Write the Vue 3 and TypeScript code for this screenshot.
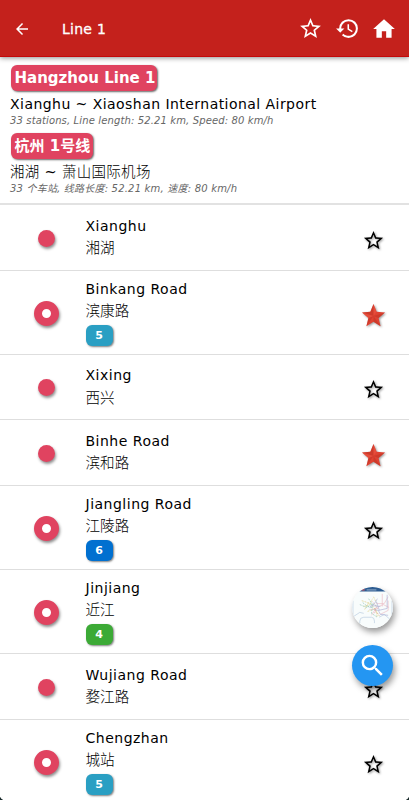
<script setup lang="ts">
interface Transfer {
  line: string
  color: string
}
interface Station {
  name: string
  local: string
  favorite: boolean
  transfer?: Transfer
}

const stations: Station[] = [
  { name: 'Xianghu', local: '湘湖', favorite: false },
  { name: 'Binkang Road', local: '滨康路', favorite: true, transfer: { line: '5', color: '#2a9fc3' } },
  { name: 'Xixing', local: '西兴', favorite: false },
  { name: 'Binhe Road', local: '滨和路', favorite: true },
  { name: 'Jiangling Road', local: '江陵路', favorite: false, transfer: { line: '6', color: '#0070d0' } },
  { name: 'Jinjiang', local: '近江', favorite: false, transfer: { line: '4', color: '#3caa36' } },
  { name: 'Wujiang Road', local: '婺江路', favorite: false },
  { name: 'Chengzhan', local: '城站', favorite: false, transfer: { line: '5', color: '#2a9fc3' } },
]
</script>

<template>
  <div class="screen">
    <header class="bar">
      <svg class="back" viewBox="0 0 24 24"><path d="M20 11H7.83l5.59-5.59L12 4l-8 8 8 8 1.41-1.41L7.83 13H20v-2z" /></svg>
      <h1 class="title">Line 1</h1>
      <svg class="action" viewBox="0 0 24 24"><path d="M22 9.24l-7.19-.62L12 2 9.19 8.63 2 9.24l5.46 4.73L5.82 21 12 17.27 18.18 21l-1.63-7.03L22 9.24zM12 15.4l-3.76 2.27 1-4.28-3.32-2.88 4.38-.38L12 6.1l1.71 4.04 4.38.38-3.32 2.88 1 4.28L12 15.4z" /></svg>
      <svg class="action" viewBox="0 0 24 24"><path d="M13 3a9 9 0 0 0-9 9H1l3.89 3.89.07.14L9 12H6c0-3.87 3.13-7 7-7s7 3.13 7 7-3.13 7-7 7c-1.93 0-3.68-.79-4.94-2.06l-1.42 1.42A8.95 8.95 0 0 0 13 21a9 9 0 0 0 0-18zm-1 5v5l4.28 2.54.72-1.21-3.5-2.08V8H12z" /></svg>
      <svg class="action home" viewBox="0 0 24 24"><path d="M10 20v-6h4v6h5v-8h3L12 3 2 12h3v8z" /></svg>
    </header>

    <section class="summary">
      <div class="badge">Hangzhou Line 1</div>
      <div class="route">Xianghu ~ Xiaoshan International Airport</div>
      <div class="facts">33 stations, Line length: 52.21 km, Speed: 80 km/h</div>
      <div class="badge local-badge">杭州 1号线</div>
      <div class="route local-route">湘湖 <span class="tilde">~</span> 萧山国际机场</div>
      <div class="facts local-facts">33 个车站, 线路长度: 52.21 km, 速度: 80 km/h</div>
    </section>

    <ul class="list">
      <li v-for="s in stations" :key="s.name" class="row" :class="{ tall: s.transfer }">
        <div class="marker"><span class="dot" :class="{ ring: s.transfer }"></span></div>
        <div class="names">
          <div class="name">{{ s.name }}</div>
          <div class="local">{{ s.local }}</div>
          <span v-if="s.transfer" class="chip" :style="{ background: s.transfer.color }">{{ s.transfer.line }}</span>
        </div>
        <svg v-if="s.favorite" class="star filled" viewBox="0 0 24 24">
          <path fill="#df4232" d="M12 0l3.3 8.2 8.7.7-6.7 5.7 2.1 8.6L12 18.6l-7.4 4.6 2.1-8.6L0 8.9l8.7-.7z" />
          <path fill="#b93224" d="M12 0v12.4L8.7 8.2zM24 8.9l-12 3.5 5.3 2.2zM19.4 23.2L12 12.4v6.2zM4.6 23.2L12 12.4l-5.3 2.2zM0 8.9l12 3.5-3.3-4.2z" opacity=".45" />
          <path fill="#f0604c" d="M12 0v12.4l3.3-4.2zM0 8.9l12 3.5-5.3 2.2z" opacity=".4" />
        </svg>
        <svg v-else class="star" viewBox="0 0 24 24"><path d="M22 9.24l-7.19-.62L12 2 9.19 8.63 2 9.24l5.46 4.73L5.82 21 12 17.27 18.18 21l-1.63-7.03L22 9.24zM12 15.4l-3.76 2.27 1-4.28-3.32-2.88 4.38-.38L12 6.1l1.71 4.04 4.38.38-3.32 2.88 1 4.28L12 15.4z" /></svg>
      </li>
    </ul>

    <div class="fab map">
      <svg viewBox="0 0 42 42" fill="none" stroke-width=".7">
        <path fill="#f8fcfc" d="M0 0h42v42H0z" />
        <path fill="#2d5c91" d="M0 0h42v4.5H0z" />
        <path stroke="#b8cce0" d="M1 14v20M41 14v20M8 37v-2q0-4 4-4h8q3 0 3 4v2M28 31l5-3 7 6M2 30l6-4 4 1" />
        <path stroke="#ecbcc6" d="M20 29l5-8 7-3 6 3M25 17h8l4-7M31 7v13M37 14v10l-8 4" />
        <path stroke="#ddcf85" stroke-dasharray="2 1" d="M10 14l9 3 5 6 4 7M12 20l6-2 3-6M16 25l8-3 2 9M22 10l3 6M13 23l4-7" />
        <path stroke="#93c8b6" stroke-dasharray="2 1" d="M8 18l7 3 6-4 5 3M17 12l4 6-1 9 6 4M11 16l5 4 5 1" />
        <path stroke="#b0b2d6" d="M18 21l5-4 3-5M22 23l5 1 2 4 8 1M36 8v14l-9 2M25 15l3 9M20 19l9 1" />
        <path stroke="#e39aa2" stroke-dasharray="1 1.5" d="M21 15l4 5-2 7M18 23l9-1M24 25l4 4" />
        <path stroke="#cf5663" stroke-width="1.2" d="M10 3h3" />
        <path stroke="#c5d5e6" d="M15 3h10" />
      </svg>
    </div>
    <div class="fab search">
      <svg viewBox="0 0 24 24"><path d="M15.5 14h-.79l-.28-.27A6.47 6.47 0 0 0 16 9.5 6.5 6.5 0 1 0 9.5 16c1.61 0 3.09-.59 4.23-1.57l.27.28v.79l5 4.99L20.49 19l-4.99-5zm-6 0a4.5 4.5 0 1 1 0-9 4.5 4.5 0 0 1 0 9z" /></svg>
    </div>
    <i class="corner left"></i>
    <i class="corner right"></i>
  </div>
</template>

<style>
body {
  overflow: hidden;
}
</style>

<style scoped>
.screen {
  position: relative;
  box-sizing: border-box;
  width: 100%;
  height: 800px;
  overflow: hidden;
  background: #fff;
  color: #000;
  font-family: "DejaVu Sans", "Noto Sans CJK SC", sans-serif;
}
.bar {
  display: flex;
  align-items: center;
  box-sizing: border-box;
  height: 57px;
  padding: 1px 12.5px 0 13px;
  background: #c4211c;
  border-bottom: 1px solid #c40809;
  box-shadow: 0 1px 5px rgba(0, 0, 0, .45);
  fill: #fff;
}
.back {
  width: 18px;
  height: 18px;
}
.title {
  flex: 1;
  margin: 0 0 0 31px;
  color: #fff;
  font-size: 14px;
  font-weight: 400;
  letter-spacing: .25px;
  line-height: 20px;
  -webkit-text-stroke: .3px #fff;
}
.action {
  width: 25px;
  height: 25px;
  margin-left: 12px;
}
.home {
  width: 26px;
  height: 26px;
  margin-left: 11px;
}
.summary {
  box-sizing: border-box;
  height: 148px;
  padding: 8px 10px 0;
  border-bottom: 2px solid #e2e2e2;
}
.badge {
  box-sizing: border-box;
  width: 146px;
  height: 26px;
  margin-left: 1px;
  padding: 0 3.5px;
  border-radius: 6px;
  background: #e04360;
  box-shadow: 1px 1px 2px rgba(0, 0, 0, .6);
  color: #fff;
  font-size: 15px;
  font-weight: 700;
  line-height: 26px;
  white-space: nowrap;
}
.local-badge {
  width: 82px;
  margin-top: 6px;
}
.route {
  height: 20px;
  margin-top: 3px;
  font-size: 14px;
  letter-spacing: .45px;
  line-height: 20px;
  white-space: nowrap;
}
.facts {
  height: 13px;
  color: #666;
  font-size: 10px;
  font-style: italic;
  letter-spacing: .13px;
  line-height: 14px;
  white-space: nowrap;
}
.local-route {
  font-size: 14.5px;
  font-weight: 300;
  letter-spacing: .3px;
}
.tilde {
  font-weight: 400;
}
.local-facts {
  letter-spacing: .2px;
}
.list {
  margin: 0;
  padding: 0;
  list-style: none;
}
.row {
  display: grid;
  grid-template-columns: 94px 1fr 70px;
  align-items: center;
  box-sizing: border-box;
  height: 65.5px;
  border-bottom: 1px solid #dedede;
}
.row.tall {
  height: 84.2px;
}
.marker {
  display: flex;
  justify-content: center;
  padding: 2px 1px 0 0;
}
.dot {
  width: 17px;
  height: 17px;
  border-radius: 50%;
  background: #e04360;
  box-shadow: 1px 2px 3px rgba(0, 0, 0, .45);
}
.dot.ring {
  box-sizing: border-box;
  width: 25px;
  height: 25px;
  border: 8px solid #e04360;
  background: #fff;
}
.names {
  margin-left: -8.5px;
}
.name,
.local {
  height: 21.5px;
  font-size: 14px;
  letter-spacing: .5px;
  line-height: 21.5px;
  white-space: nowrap;
}
.local {
  font-size: 14.6px;
  font-weight: 300;
  letter-spacing: 0;
}
.chip {
  display: block;
  width: 27px;
  height: 21px;
  margin-top: 3px;
  border-radius: 6px;
  box-shadow: 1px 1px 2px rgba(0, 0, 0, .5);
  color: #fff;
  font-size: 11px;
  font-weight: 700;
  line-height: 21px;
  text-align: center;
}
.star {
  justify-self: center;
  width: 23px;
  height: 23px;
  margin: 6px 1px 0 0;
  filter: drop-shadow(1px 1px 1px rgba(0, 0, 0, .4));
}
.fab {
  position: absolute;
  overflow: hidden;
  border-radius: 50%;
  box-shadow: 2px 4px 6px rgba(0, 0, 0, .4);
}
.map {
  top: 587px;
  left: 352px;
  width: 41px;
  height: 41px;
}
.map svg {
  display: block;
}
.search {
  top: 645px;
  left: 352px;
  display: flex;
  align-items: center;
  justify-content: center;
  width: 41px;
  height: 41px;
  background: #2496f2;
  fill: #fff;
}
.search svg {
  width: 29px;
  height: 29px;
}
.corner {
  position: absolute;
  bottom: 0;
  width: 5px;
  height: 5px;
}
.corner.left {
  left: 0;
  background: radial-gradient(circle at 100% 0, transparent 4.8px, #1b2b2c 5.5px);
}
.corner.right {
  right: 0;
  background: radial-gradient(circle at 0 0, transparent 4.8px, #1b2b2c 5.5px);
}
</style>
